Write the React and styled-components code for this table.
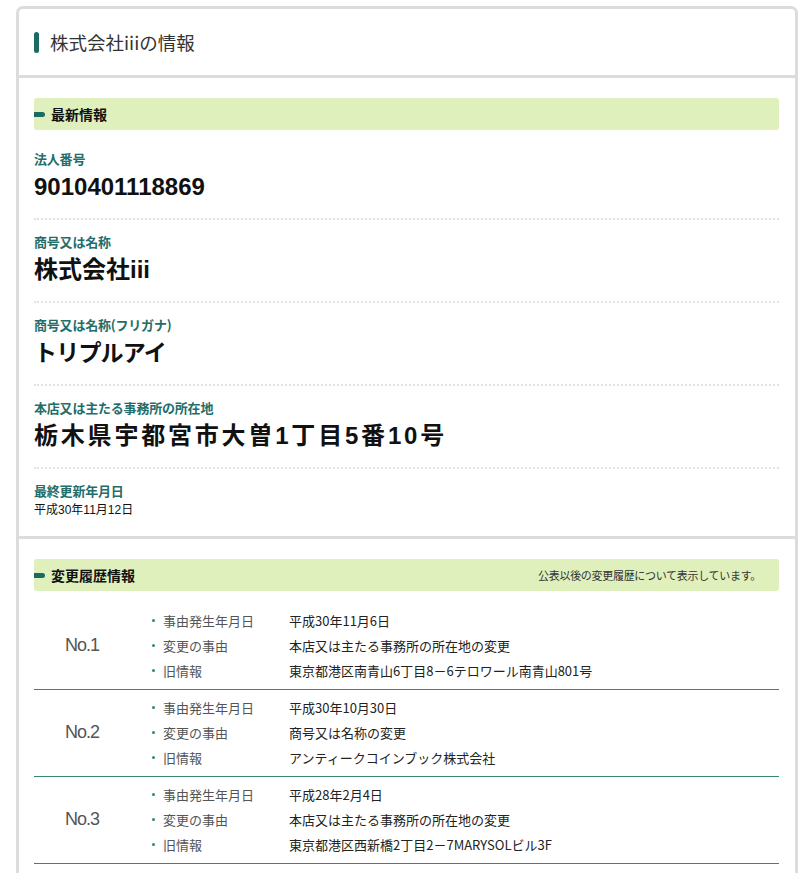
import React from "react";
import styled, { createGlobalStyle } from "styled-components";

const GlobalStyle = createGlobalStyle`
  html, body { margin: 0; padding: 0; background: #fff; }
  body { font-family: "Liberation Sans", "Noto Sans CJK JP", sans-serif; color: #222; }
  * { box-sizing: border-box; }
`;

const Page = styled.div`
  padding: 6px 8px 0 16px;
`;

const Card = styled.div`
  border: 3px solid #dcdcdc;
  border-bottom: none;
  border-radius: 7px 7px 0 0;
  background: #fff;
`;

const CardHeader = styled.div`
  height: 69px;
  display: flex;
  align-items: center;
  gap: 11px;
  padding-left: 15px;
  border-bottom: 3px solid #dcdcdc;
`;

const HeaderMark = styled.span`
  width: 5px;
  height: 21px;
  border-radius: 3px;
  background: #1b6a64;
`;

const HeaderTitle = styled.h1`
  margin: 0;
  font-family: "Noto Sans CJK JP", sans-serif;
  font-size: 18.5px;
  font-weight: 400;
  color: #333;
`;

const Section = styled.section`
  padding: 20px 16px ${(p) => p.$pb || 0}px 15px;
  border-bottom: ${(p) => (p.$divider ? "3px solid #dcdcdc" : "none")};
`;

const SectionBar = styled.div`
  height: 32px;
  display: flex;
  align-items: center;
  justify-content: space-between;
  background: #e0f0bc;
  border-radius: 3px;
  padding-right: 18px;
`;

const SectionTitle = styled.h2`
  margin: 0;
  display: flex;
  align-items: center;
  gap: 6px;
  font-family: "Noto Sans CJK JP", sans-serif;
  font-size: 14px;
  font-weight: 700;
  color: #111;
  &::before {
    content: "";
    width: 11px;
    height: 5px;
    border-radius: 0 3px 3px 0;
    background: #1b6a64;
  }
`;

const SectionNote = styled.span`
  font-family: "Noto Sans CJK JP", sans-serif;
  font-size: 11px;
  color: #333;
  letter-spacing: -0.3px;
`;

const FieldList = styled.dl`
  margin: 7px 0 0;
`;

const Field = styled.div`
  padding: 12px 0 ${(p) => (p.$last ? 0 : 13)}px;
  border-bottom: ${(p) => (p.$last ? "none" : "2px dotted #e2e2e2")};
`;

const FieldLabel = styled.dt`
  font-family: "Noto Sans CJK JP", sans-serif;
  font-size: 13px;
  line-height: 20px;
  font-weight: 700;
  color: #236d6a;
  letter-spacing: -0.2px;
`;

const FieldValue = styled.dd`
  margin: 0;
  font-size: ${(p) => (p.$small ? 12 : p.$size || 24)}px;
  line-height: ${(p) => (p.$small ? 18 : 36)}px;
  font-weight: ${(p) => (p.$small ? 400 : 700)};
  letter-spacing: ${(p) => p.$spacing || "0"};
  color: #111;
`;

const HistoryList = styled.div`
  margin-top: 12px;
`;

const HistoryRow = styled.div`
  display: grid;
  grid-template-columns: 96px 1fr;
  column-gap: 18px;
  align-items: center;
  padding: 5px 0 6px;
  border-bottom: 1px solid #348a68;
`;

const RowNo = styled.div`
  text-align: center;
  font-family: "Liberation Sans", sans-serif;
  font-size: 18px;
  letter-spacing: -1px;
  color: #555;
`;

const DetailList = styled.dl`
  margin: 0;
`;

const DetailItem = styled.div`
  display: grid;
  grid-template-columns: 15px 126px 1fr;
  align-items: center;
  height: 25px;
  font-family: "Noto Sans CJK JP", sans-serif;
  font-size: 13px;
`;

const Bullet = styled.span`
  display: flex;
  justify-content: flex-start;
  padding-left: 4px;
  &::before {
    content: "";
    width: 3px;
    height: 3px;
    border-radius: 50%;
    background: #2f8a6c;
  }
`;

const DetailLabel = styled.dt`
  color: #555;
`;

const DetailValue = styled.dd`
  margin: 0;
  color: #222;
  white-space: nowrap;
`;

const fields = [
  { label: "法人番号", value: "9010401118869" },
  { label: "商号又は名称", value: "株式会社iii" },
  { label: "商号又は名称(フリガナ)", value: "トリプルアイ", size: 23, spacing: "-0.8px" },
  { label: "本店又は主たる事務所の所在地", value: "栃木県宇都宮市大曽1丁目5番10号", spacing: "2.8px" },
  { label: "最終更新年月日", value: "平成30年11月12日", small: true, last: true },
];

const history = [
  {
    no: "No.1",
    date: "平成30年11月6日",
    reason: "本店又は主たる事務所の所在地の変更",
    old: "東京都港区南青山6丁目8－6テロワール南青山801号",
  },
  {
    no: "No.2",
    date: "平成30年10月30日",
    reason: "商号又は名称の変更",
    old: "アンティークコインブック株式会社",
  },
  {
    no: "No.3",
    date: "平成28年2月4日",
    reason: "本店又は主たる事務所の所在地の変更",
    old: "東京都港区西新橋2丁目2－7MARYSOLビル3F",
  },
];

function Detail({ label, value }) {
  return (
    <DetailItem>
      <Bullet />
      <DetailLabel>{label}</DetailLabel>
      <DetailValue>{value}</DetailValue>
    </DetailItem>
  );
}

export default function App() {
  return (
    <Page>
      <GlobalStyle />
      <Card>
        <CardHeader>
          <HeaderMark />
          <HeaderTitle>株式会社iiiの情報</HeaderTitle>
        </CardHeader>

        <Section $divider $pb={17}>
          <SectionBar>
            <SectionTitle>最新情報</SectionTitle>
          </SectionBar>
          <FieldList>
            {fields.map((f) => (
              <Field key={f.label} $last={f.last}>
                <FieldLabel>{f.label}</FieldLabel>
                <FieldValue $small={f.small} $size={f.size} $spacing={f.spacing}>
                  {f.value}
                </FieldValue>
              </Field>
            ))}
          </FieldList>
        </Section>

        <Section $pb={20}>
          <SectionBar>
            <SectionTitle>変更履歴情報</SectionTitle>
            <SectionNote>公表以後の変更履歴について表示しています。</SectionNote>
          </SectionBar>
          <HistoryList>
            {history.map((h) => (
              <HistoryRow key={h.no}>
                <RowNo>{h.no}</RowNo>
                <DetailList>
                  <Detail label="事由発生年月日" value={h.date} />
                  <Detail label="変更の事由" value={h.reason} />
                  <Detail label="旧情報" value={h.old} />
                </DetailList>
              </HistoryRow>
            ))}
          </HistoryList>
        </Section>
      </Card>
    </Page>
  );
}
